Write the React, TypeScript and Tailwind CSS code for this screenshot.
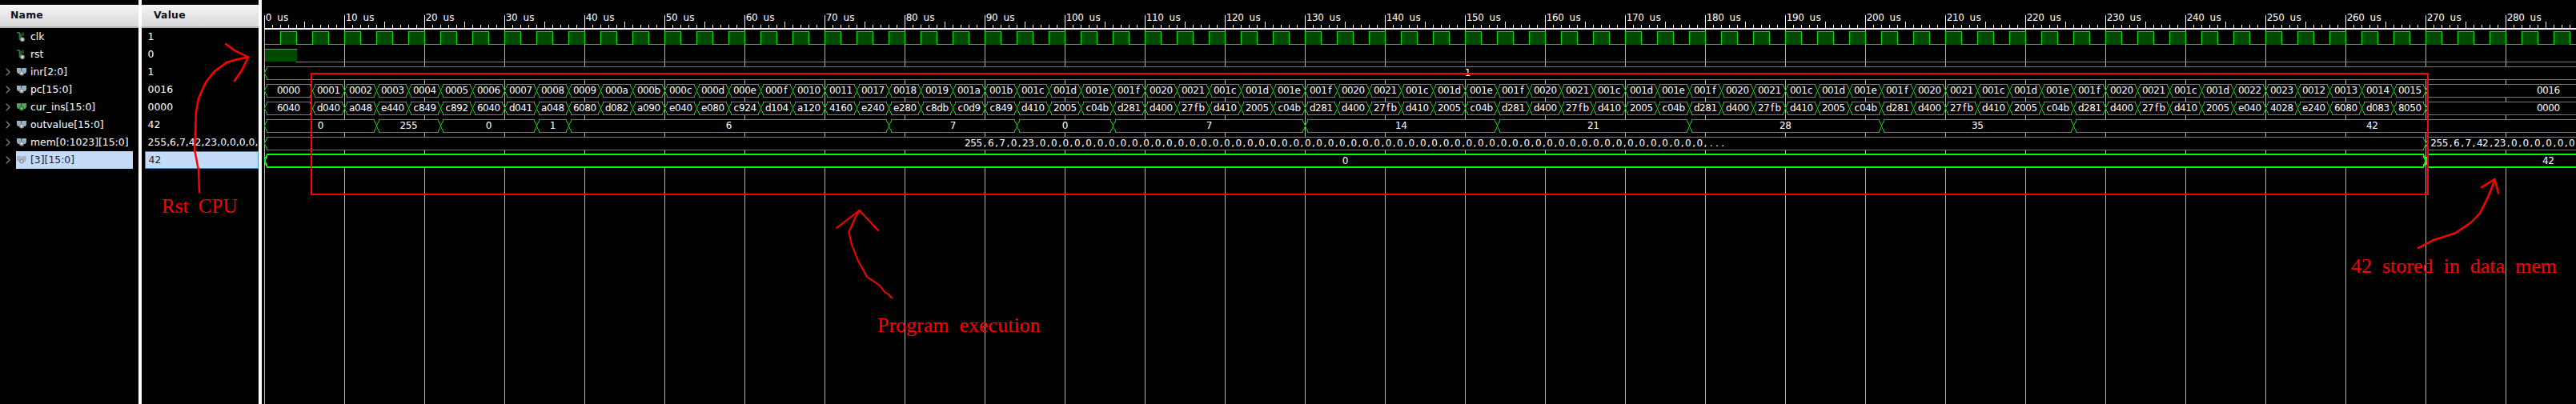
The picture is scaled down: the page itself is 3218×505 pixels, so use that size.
import { ChevronRight } from "lucide-react";

const signals = [
  { name: "clk", value: "1", icon: "scalar" },
  { name: "rst", value: "0", icon: "scalar" },
  { name: "inr[2:0]", value: "1", icon: "bus" },
  { name: "pc[15:0]", value: "0016", icon: "bus" },
  { name: "cur_ins[15:0]", value: "0000", icon: "green" },
  { name: "outvalue[15:0]", value: "42", icon: "bus" },
  { name: "mem[0:1023][15:0]", value: "255,6,7,42,23,0,0,0,0,", icon: "bus" },
  { name: "[3][15:0]", value: "42", icon: "selected" },
];

const END = 300.6;
const PITCH = 7.2;
const px = (t: number) => 3.5 + t * 10;

type Seg = [number, number, string];

// one label per clock period, first one lasts 6 us
const periodSegs = (labels: string[]): Seg[] =>
  labels.map((label, i) => {
    if (i === 0) return [0, 6, label] as Seg;
    if (i === labels.length - 1) return [6 + (i - 1) * 4, END, label] as Seg;
    return [6 + (i - 1) * 4, 6 + i * 4, label] as Seg;
  });

const rep = (items: string[], n: number) => Array.from({ length: n }, () => items).flat();

const pcLabels = [
  "0000", "0001", "0002", "0003", "0004", "0005", "0006", "0007", "0008", "0009", "000a", "000b", "000c", "000d", "000e", "000f", "0010", "0011",
  "0017", "0018", "0019", "001a", "001b",
  ...rep(["001c", "001d", "001e", "001f", "0020", "0021"], 6),
  "001c", "001d", "0022", "0023", "0012", "0013", "0014", "0015", "0016",
];

const insLabels = [
  "6040", "d040", "a048", "e440", "c849", "c892", "6040", "d041", "a048", "6080", "d082", "a090", "e040", "e080", "c924", "d104", "a120", "4160",
  "e240", "e280", "c8db", "c0d9", "c849",
  ...rep(["d410", "2005", "c04b", "d281", "d400", "27fb"], 6),
  "d410", "2005", "e040", "4028", "e240", "6080", "d083", "8050", "0000",
];

const outSegs: Seg[] = [
  [0, 14, "0"], [14, 22, "255"], [22, 34, "0"], [34, 38, "1"], [38, 78, "6"], [78, 94, "7"], [94, 106, "0"],
  [106, 130, "7"], [130, 154, "14"], [154, 178, "21"], [178, 202, "28"], [202, 226, "35"], [226, END, "42"],
];

const memBefore = "255,6,7,0,23," + "0,".repeat(58) + "...";
const memAfter = "255,6,7,42,23,0,0,0,0,0,0";

const buses: { top: number; segs: Seg[]; thick?: boolean }[] = [
  { top: 83.5, segs: [[0, END, "1"]] },
  { top: 105.5, segs: periodSegs(pcLabels) },
  { top: 127.5, segs: periodSegs(insLabels) },
  { top: 149.5, segs: outSegs },
  { top: 171.5, segs: [[0, 270, memBefore], [270, END, memAfter]] },
  { top: 193, segs: [[0, 270, "0"], [270, END, "42"]], thick: true },
];

function MonoText({ x, y, text }: { x: number; y: number; text: string }) {
  const xs = Array.from(text, (_, i) => (x + i * PITCH + PITCH / 2).toFixed(1)).join(" ");
  return (
    <text x={xs} y={y} textAnchor="middle" xmlSpace="preserve" className="fill-white font-['DejaVu_Sans',sans-serif] text-[12px]">
      {text}
    </text>
  );
}

function ScalarIcon() {
  return (
    <svg width="13" height="14" viewBox="0 0 13 14" fill="none">
      <path d="M0 1.5H3.5V11" stroke="#2fa33f" strokeWidth="1.2" />
      <path d="M8.5 1V6" stroke="#2fa33f" strokeWidth="1.2" />
      <path d="M5.5 2V9" stroke="#8d8d8d" strokeWidth="1.2" />
      <circle cx="7.5" cy="10.5" r="3" fill="#a8a8a8" />
      <circle cx="7.5" cy="10.5" r="1.1" fill="#efefef" />
    </svg>
  );
}

function BusIcon({ fill, dot, ring }: { fill: string; dot: string; ring: string }) {
  return (
    <svg width="12" height="10" viewBox="0 0 12 10">
      <path d="M0 0H5L5.5 1V7H1.5L0 5Z" fill={fill} />
      <path d="M12 0H6.5L6 1V7H10.5L12 5Z" fill={fill} />
      <circle cx="6" cy="6.5" r="3" fill={ring} />
      <circle cx="6" cy="6.5" r="1.2" fill={dot} />
    </svg>
  );
}

function SignalIcon({ kind }: { kind: string }) {
  if (kind === "scalar") return <ScalarIcon />;
  if (kind === "green") return <BusIcon fill="#55a05c" ring="#2f7f38" dot="#8fd08f" />;
  if (kind === "selected") return <BusIcon fill="#a3b8c8" ring="#9a9a9a" dot="#e6e6e6" />;
  return <BusIcon fill="#8fb4c8" ring="#9a9a9a" dot="#ececec" />;
}

function Header({ label, className }: { label: string; className: string }) {
  return (
    <div className={`h-[29px] flex items-center border-b-2 border-[#b4b4b4] bg-gradient-to-b from-[#f3f3f3] to-[#d9d9d9] font-bold text-[12.4px] text-[#101018] tracking-[0.2px] ${className}`}>
      {label}
    </div>
  );
}

function Wave() {
  const ticks = Array.from({ length: 290 }, (_, i) => i);
  const clock: number[] = [];
  for (let t = 2; t < 290; t += 4) clock.push(t);
  return (
    <svg width="2891" height="505" viewBox="0 0 2891 505" className="block">
      <g shapeRendering="crispEdges">
        {ticks.filter((t) => t % 10 === 0).map((t) => (
          <line key={t} x1={px(t)} x2={px(t)} y1="36" y2="505" stroke="#b4b4b4" />
        ))}
        <rect x="3" y="35" width="2888" height="2" fill="#f4f4f4" />
        {ticks.map((t) => (
          <line key={t} x1={px(t)} x2={px(t)} y1={t % 10 === 0 ? 19 : t % 5 === 0 ? 27 : 31} y2="35" stroke="#f0f0f0" />
        ))}

        <path d={`M${px(0)} 55.5H2891`} stroke="#00d800" fill="none" />
        {clock.map((t) => (
          <path key={t} d={`M${px(t)} 55.5V39.5H${px(t + 2)}V55.5`} stroke="#00e000" fill="#004a00" />
        ))}
        <path d={`M${px(0)} 61.5H${px(4)}V77.5H2891`} stroke="#00d000" fill="none" />
        <rect x={px(0)} y="62" width="40" height="15" fill="#004a00" />

        {buses.map((bus) =>
          bus.segs.map(([a, b]) => {
            const mid = bus.top + 8;
            const bottom = bus.top + 16;
            const l = px(a);
            const r = px(b);
            return (
              <polygon
                key={`${bus.top}-${a}`}
                points={`${l},${mid} ${l + 3.5},${bus.top} ${r - 3.5},${bus.top} ${r},${mid} ${r - 3.5},${bottom} ${l + 3.5},${bottom}`}
                fill="#000"
                stroke={bus.thick ? "#00ff00" : "#00cc00"}
                strokeWidth={bus.thick ? 2 : 1}
              />
            );
          })
        )}
      </g>

      {ticks.filter((t) => t % 10 === 0).map((t) => (
        <MonoText key={t} x={px(t) + 1.5} y={26} text={`${t} us`} />
      ))}

      {buses.map((bus) =>
        bus.segs.map(([a, b, label]) => {
          const y = bus.top + (bus.thick ? 12 : 11.5);
          // the value after the write is too long for its slot, so it starts at the left edge
          const x = label === memAfter ? px(a) + 6 : (px(a) + px(b)) / 2 - (label.length * PITCH) / 2;
          return <MonoText key={`${bus.top}-${a}-t`} x={x} y={y} text={label} />;
        })
      )}
    </svg>
  );
}

function Annotations() {
  return (
    <>
      <div className="absolute left-[388px] top-[91px] w-[2646px] h-[153px] border-2 border-[#ff0000]" />
      <svg width="3218" height="505" viewBox="0 0 3218 505" fill="none" stroke="#ff0000" strokeLinecap="round" strokeLinejoin="round" className="absolute left-0 top-0">
        <path strokeWidth="2.5" d="M249 240 L248 213 L245 197 L243 187 L244 165 L245 140 L248 123 L257 103 L267 90 L283 78 L297 74 L310 71.5" />
        <path strokeWidth="2.5" d="M282 55 L293 63 L310 71.5 L302 88 L293 101" />
        <path strokeWidth="2" d="M1114 372.5 L1110 368 L1105 365 L1099 357 L1083 346 L1072 326 L1064 306 L1060.5 290 L1068 273 L1073.5 263" />
        <path strokeWidth="2" d="M1045 285 L1073.5 263 L1097 288" />
        <path strokeWidth="2.5" d="M3021 310 L3040 300 L3067 291.5 L3087 278 L3098 266.5 L3108 246.5 L3116.5 225" />
        <path strokeWidth="2.5" d="M3100 234 L3116.5 224 L3121 241.5" />
      </svg>
      <span className="absolute left-[202px] top-[243px] whitespace-pre font-['Liberation_Serif',serif] text-[25px] leading-[29px] text-[#ff0000]">Rst  CPU</span>
      <span className="absolute left-[1096px] top-[392px] whitespace-pre font-['Liberation_Serif',serif] text-[26px] leading-[30px] text-[#ff0000]">Program  execution</span>
      <span className="absolute left-[2937px] top-[318px] whitespace-pre font-['Liberation_Serif',serif] text-[26px] leading-[30px] text-[#ff0000]">42  stored  in  data  mem</span>
    </>
  );
}

export default function App() {
  return (
    <div className="relative flex w-[3218px] h-[505px] overflow-hidden bg-black font-['DejaVu_Sans',sans-serif] text-[12.4px] text-white">
      <div className="w-[173px] pt-[6px]">
        <Header label="Name" className="pl-[13px]" />
        {signals.map((s, i) => {
          const selected = s.icon === "selected";
          return (
            <div key={s.name} className="h-[22px] flex items-center">
              <div className="w-5 flex justify-center">
                {i > 1 && <ChevronRight size={16} strokeWidth={1.6} className="text-[#8c8c8c]" />}
              </div>
              <div className={`flex-1 mr-[7px] h-full flex items-center gap-[5px] pl-px ${selected ? "bg-[#c5dbfa] text-[#20242c]" : ""}`}>
                <div className="w-[12px] flex justify-center">
                  <SignalIcon kind={s.icon} />
                </div>
                <span className="whitespace-pre">{s.name}</span>
              </div>
            </div>
          );
        })}
      </div>
      <div className="w-1 bg-white" />
      <div className="w-[146px] pt-[6px] overflow-hidden">
        <Header label="Value" className="pl-[15px]" />
        {signals.map((s) => (
          <div
            key={s.name}
            className={`h-[22px] flex items-center ml-1 pl-[3.5px] whitespace-pre ${s.icon === "selected" ? "bg-[#c5dbfa] text-[#20242c] border border-[#3a8dd0]" : ""}`}
          >
            {s.value}
          </div>
        ))}
      </div>
      <div className="w-1 bg-white" />
      <div className="flex-1 overflow-hidden">
        <Wave />
      </div>
      <Annotations />
    </div>
  );
}
